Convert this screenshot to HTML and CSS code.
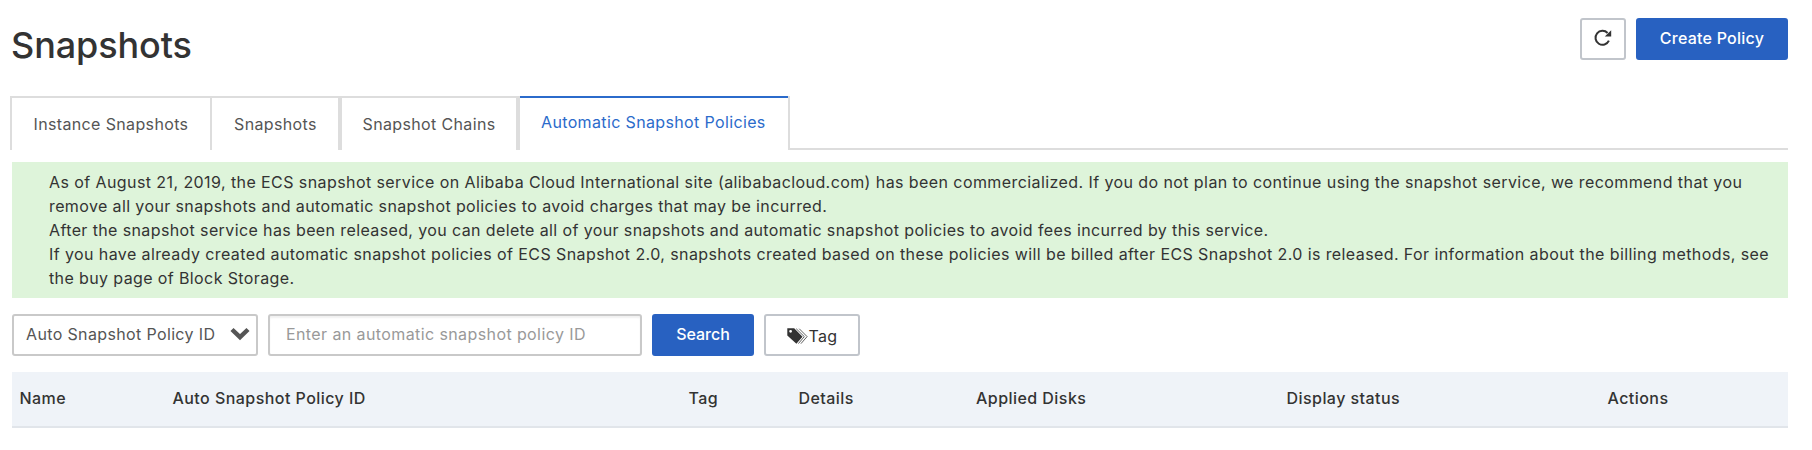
FILE: index.html
```html
<!DOCTYPE html>
<html lang="en">
<head>
<meta charset="utf-8">
<title>Snapshots</title>
<link rel="stylesheet" href="styles.css">
</head>
<body>
<header class="page-header">
  <h1 class="page-title">Snapshots</h1>
  <div class="header-actions">
    <button class="btn btn-refresh" aria-label="Refresh">
      <svg width="18" height="18" viewBox="0 0 18 18"><path d="M14.9 11.7A7 7 0 1 1 13.6 4" fill="none" stroke="#333" stroke-width="2"/><path d="M17.2 1.2V7.6H10.8Z" fill="#333"/></svg>
    </button>
    <button class="btn btn-primary btn-create">Create Policy</button>
  </div>
</header>
<nav class="tabs">
  <a class="tab tab-instance">Instance Snapshots</a>
  <a class="tab tab-snapshots">Snapshots</a>
  <a class="tab tab-chains">Snapshot Chains</a>
  <a class="tab tab-policies active"><span>Automatic Snapshot Policies</span></a>
</nav>
<section class="notice">
  <p class="line-a">As of August 21, 2019, the ECS snapshot service on Alibaba Cloud International site (alibabacloud.com) has been commercialized. If you do not plan to continue using the snapshot service, we recommend that you</p>
  <p>remove all your snapshots and automatic snapshot policies to avoid charges that may be incurred.</p>
  <p>After the snapshot service has been released, you can delete all of your snapshots and automatic snapshot policies to avoid fees incurred by this service.</p>
  <p class="line-d">If you have already created automatic snapshot policies of ECS Snapshot 2.0, snapshots created based on these policies will be billed after ECS Snapshot 2.0 is released. For information about the billing methods, see</p>
  <p>the buy page of Block Storage.</p>
</section>
<div class="toolbar">
  <div class="select"><span>Auto Snapshot Policy ID</span>
    <svg width="20" height="14" viewBox="0 0 20 14"><path d="M2 2.5L10 10.2L18 2.5" fill="none" stroke="#555" stroke-width="4.4"/></svg>
  </div>
  <input class="search-input" type="text" placeholder="Enter an automatic snapshot policy ID">
  <button class="btn btn-primary btn-search">Search</button>
  <button class="btn btn-tag"><svg width="21" height="18" viewBox="0 0 21 18"><path fill-rule="evenodd" d="M.3 1.2H7.2L15.5 9.7L9.4 16.7L.3 8.4ZM3.6 2.9A1.4 1.4 0 1 0 3.6 5.7A1.4 1.4 0 1 0 3.6 2.9Z" fill="#333"/><path d="M9.2 1.7L17.3 9.6L11.4 16.6M12.2 1.7L20.1 9.6L13.9 16.7" fill="none" stroke="#444" stroke-width=".85"/></svg><span>Tag</span></button>
</div>
<div class="table-head">
  <span>Name</span><span>Auto Snapshot Policy ID</span><span>Tag</span><span>Details</span><span>Applied Disks</span><span>Display status</span><span>Actions</span>
</div>
</body>
</html>
```
FILE: styles.css
```css
* { box-sizing: border-box; }
body {
  margin: 0;
  padding: 0 24px 0 12px;
  background: #fff;
  color: #333;
  font: 16px/24px Inter, "Liberation Sans", sans-serif;
  letter-spacing: 0.36px;
}
.page-header {
  display: flex;
  justify-content: space-between;
  align-items: flex-start;
  height: 96px;
  padding-top: 18px;
}
.page-title {
  margin: 5px 0 0 -1px;
  font-size: 36px;
  line-height: 44px;
  font-weight: 500;
  letter-spacing: -0.1px;
}
.header-actions { display: flex; gap: 10px; }
.btn {
  display: flex;
  align-items: center;
  justify-content: center;
  height: 42px;
  padding: 0;
  border: 2px solid #c1c5cb;
  border-radius: 3px;
  background: #fff;
  color: #333;
  font: inherit;
  letter-spacing: inherit;
}
.btn-primary {
  border-color: #2861c1;
  background: #2861c1;
  color: #fff;
  font-weight: 500;
  letter-spacing: 0.24px;
}
.btn-refresh { width: 46px; }
.btn-refresh svg { margin-bottom: 2px; }
.btn-create { width: 152px; padding-bottom: 3px; }
.tabs {
  display: flex;
  height: 54px;
  margin-left: -2px;
  background: linear-gradient(#ddd, #ddd) right bottom / 998px 2px no-repeat;
}
.tab {
  padding: 14px 0 0 21.5px;
  border-top: 2px solid #ddd;
  border-right: 2px solid #ddd;
  color: #555;
  white-space: nowrap;
}
.tab-instance { width: 202px; border-left: 2px solid #ddd; }
.tab-snapshots { width: 128px; padding-left: 22px; }
.tab-chains { width: 178px; border-left: 2px solid #ddd; padding-left: 20.5px; }
.tab-policies { width: 272px; border-left: 2px solid #ddd; }
.tab.active {
  padding: 0;
  border-top: 0;
  color: #2b6bcb;
}
.active span {
  display: block;
  height: 52px;
  padding: 12px 0 0 21px;
  border-top: 2px solid #2b6bcb;
}
.notice {
  height: 136px;
  margin-top: 12px;
  padding: 8px 0 8px 37px;
  background: #def4da;
  letter-spacing: 0.384px;
  white-space: nowrap;
}
.notice p { margin: 0; }
.notice .line-a { letter-spacing: 0.416px; }
.notice .line-d { letter-spacing: 0.405px; }
.toolbar { display: flex; gap: 10px; padding: 16px 0; }
.select {
  display: flex;
  align-items: center;
  justify-content: space-between;
  width: 246px;
  height: 42px;
  padding: 0 6px 2px 12px;
  border: 2px solid #c9c9c9;
  border-radius: 3px;
  color: #555;
}
.search-input {
  width: 374px;
  height: 42px;
  padding: 0 16px 2px;
  border: 2px solid #c9c9c9;
  border-radius: 3px;
  box-shadow: inset 0 2px 2px rgba(0, 0, 0, 0.06);
  font: inherit;
  letter-spacing: 0.4px;
}
.search-input::placeholder { color: #999; opacity: 1; }
.btn-search { width: 102px; padding-bottom: 2px; letter-spacing: 0; }
.btn-tag { width: 96px; padding: 2px 0 0 1px; gap: 0; }
.table-head {
  display: grid;
  grid-template-columns: 153px 516px 110px 177.5px 310.5px 321px 1fr;
  align-items: center;
  height: 56px;
  padding: 0 0 2px 7.5px;
  border-bottom: 2px solid #e1e5ea;
  background: #eff3f8;
  font-weight: 500;
  letter-spacing: 0.45px;
}
```
